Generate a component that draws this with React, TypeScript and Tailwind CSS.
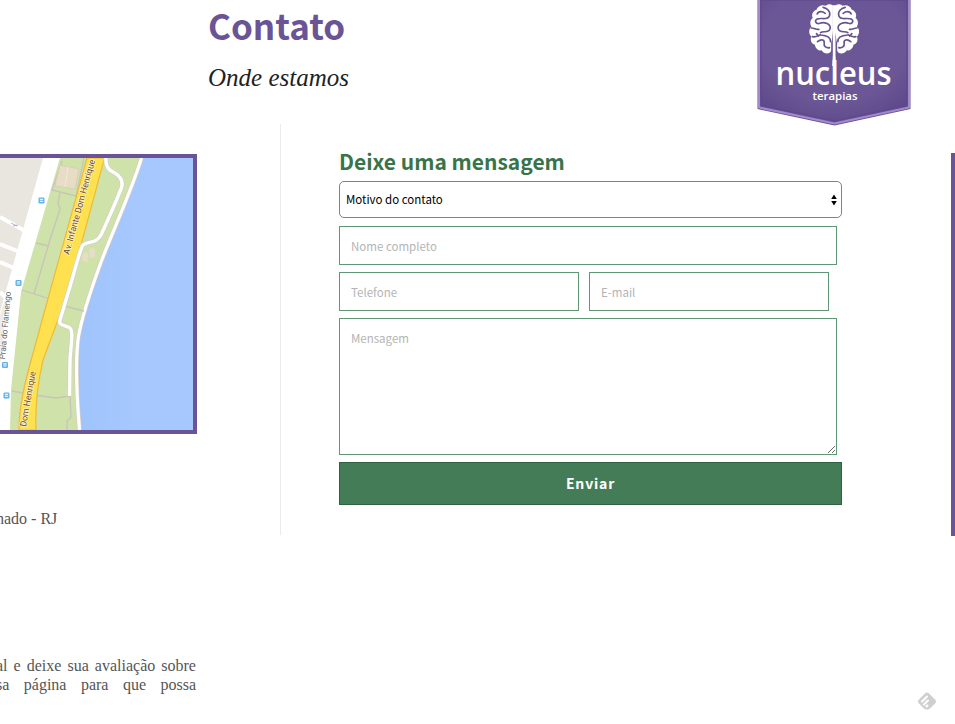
import type { ReactNode } from "react";

const SANS = "font-['Noto_Sans_CJK_JP','Open_Sans',sans-serif]";
const SERIF = "font-['Liberation_Serif',serif]";
const FIELD =
  "block border border-[#5f9673] bg-white px-[11px] text-[11.5px] text-black outline-none placeholder:text-[#b4b4b4] placeholder:opacity-100";

function StreetLabel({ x, y, angle, length, size = 9, fill, children }: {
  x: number; y: number; angle: number; length: number; size?: number; fill: string; children: ReactNode;
}) {
  return (
    <text
      transform={`translate(${x} ${y}) rotate(${angle})`}
      fontFamily="Roboto, sans-serif"
      fontSize={size}
      fill={fill}
      stroke="#fff"
      strokeOpacity="0.65"
      strokeWidth="1.6"
      paintOrder="stroke"
      textLength={length}
      lengthAdjust="spacingAndGlyphs"
    >
      {children}
    </text>
  );
}

function BusStop({ x, y }: { x: number; y: number }) {
  return (
    <g transform={`translate(${x} ${y})`}>
      <rect x="-3" y="-3" width="6" height="6" rx="1.2" fill="#5fb0e8" />
      <rect x="-1.7" y="-1.8" width="3.4" height="1.5" fill="#e4f3fd" />
      <rect x="-1.7" y="0.4" width="3.4" height="1.1" fill="#e4f3fd" />
    </g>
  );
}

function StreetMap() {
  return (
    <svg className="block" width="193" height="272" viewBox="0 158 193 272">
      <defs>
        <linearGradient id="bay" x1="0" x2="1">
          <stop offset="0" stopColor="#9fc3fb" />
          <stop offset="0.5" stopColor="#a6c8ff" />
        </linearGradient>
      </defs>
      <rect y="158" width="193" height="272" fill="#e9e6df" />
      <path d="M0 217L25 231M0 244L20 252M0 262L14 268M0 292L8 300" stroke="#fff" strokeWidth="4" fill="none" />
      <path d="M43 158H62L22 293L13 390V430H0V312Z" fill="#fff" />
      <path d="M0 315L5 300L3 345L0 365Z" fill="#eeece7" />
      <path d="M60 158H145L93 293L80 330L78 373L81 430H10L11 390L21 292Z" fill="#cfe2aa" />
      <path d="M142.500 158C132 192 115 228 102 262C94 284 84 311 79.500 336C76 360 78 400 80.500 430H193V158Z" fill="url(#bay)" />
      <path d="M141.500 158C131 192 114 228 101 262C93 284 83 311 78.500 336C75 360 77 400 79.500 430" fill="none" stroke="#d5cdc4" strokeWidth="4.500" />
      <path d="M141.500 158C131 192 114 228 101 262C93 284 83 311 78.500 336C75 360 77 400 79.500 430" fill="none" stroke="#fff" strokeWidth="3.200" />
      <g fill="none" stroke="#c8c4b9" strokeWidth="1.300">
        <path d="M62 161L52 190L76 196L84 158M60 193L58 203L60 209L49 243L34 294M36 243L49 246M22 290L50 299M64 306L84 311M12 391L34 395L56 398L70 396L71 417L67 421V430" />
      </g>
      <path d="M60 165L79 169L75 189L55 186Z" fill="#e7dcc5" stroke="#d9d0b7" />
      <path d="M68 167L65 187" stroke="#f2ead7" />
      <path d="M83 252L88 253V262L82 261ZM90 248L95 249V258L89 257Z" fill="#e7dcc5" />
      <path d="M87 158H104.500L68 293L43 360C37 386 35 406 36 430H19C19 408 23 390 29 368L49 295Z" fill="#ffe14f" stroke="#edbb37" strokeWidth="1.200" />
      <path id="promenade" d="M106 156C105 166 108 170 115 173C121 177 124 182 121 189C115 204 107 222 101 235C96 244 88 241 83 245C80 248 73 278 68 293L60 320C58 326 66 325 70 328C74 331 70 351 70 361L69.500 396" fill="none" stroke="#d2d2c1" strokeWidth="4.600" />
      <use href="#promenade" />
      <path d="M106 156C105 166 108 170 115 173C121 177 124 182 121 189C115 204 107 222 101 235C96 244 88 241 83 245C80 248 73 278 68 293L60 320C58 326 66 325 70 328C74 331 70 351 70 361L69.500 396" fill="none" stroke="#fff" strokeWidth="3.400" />
      <path d="M11 223L17 226M13 226L18 225" stroke="#9ca3b5" strokeWidth="0.800" />
      <StreetLabel x={69} y={255} angle={-74.5} length={98} fill="#714b24">Av. Infante Dom Henrique</StreetLabel>
      <StreetLabel x={26} y={427} angle={-80} length={56} fill="#714b24">Dom Henrique</StreetLabel>
      <StreetLabel x={5} y={359.500} angle={-85} length={68} size={8.500} fill="#666">Praia do Flamengo</StreetLabel>
      <BusStop x={41.500} y={200.500} />
      <BusStop x={18.500} y={283} />
      <BusStop x={5} y={365} />
      <BusStop x={6.500} y={395.500} />
    </svg>
  );
}

function BrainHalf() {
  return (
    <g>
      <path d="M249 15C241 11 234 12 229 17C218 13 205 17 201 29C189 33 185 45 190 54C181 60 181 72 186 80C176 88 178 103 186 110C180 121 188 132 196 134C198 147 209 153 216 151C225 165 243 163 245 151V128C249 120 249 102 249 92Z" fill="#fff" />
      <g fill="none" stroke="#67548f" strokeWidth="5" strokeLinecap="round" strokeLinejoin="round">
        <path d="M221 22C233 25 244 34 240 47C236 62 213 52 203 57C193 62 200 74 211 70C225 64 244 73 242 85C239 102 220 91 213 98" />
        <path d="M203 42C207 32 220 34 227 40" />
        <path d="M185 84C194 83 199 90 208 88M189 110C203 113 208 103 214 105C227 106 244 110 243 125" />
        <path d="M204 125C216 115 226 120 224 130C222 139 231 145 240 143M201 101L207 108" />
      </g>
    </g>
  );
}

function Logo() {
  return (
    <svg className="ml-auto mr-11 h-[126px] w-[154px] shrink-0" viewBox="757.500 0 154 126" role="img" aria-label="nucleus terapias">
      <defs>
        <radialGradient id="ribbon" cx="0.5" cy="0.35" r="0.75">
          <stop offset="0.65" stopColor="#6b5796" />
          <stop offset="1" stopColor="#5c4688" />
        </radialGradient>
      </defs>
      <path d="M758 0H911V109L835 125.500L758 109Z" fill="#69519a" />
      <path d="M759.500 0V107.500L835 123.500L909.500 107.500V0" fill="none" stroke="#a28bc9" strokeWidth="2" />
      <path d="M761.500 0H907.500V105.500L835 121L761.500 105.500Z" fill="url(#ribbon)" stroke="#5d468b" strokeWidth="1" />
      <g transform="translate(750 0) scale(.33333)">
        <BrainHalf />
        <g transform="translate(508 0) scale(-1 1)"><BrainHalf /></g>
        <path d="M248 16H260V94L258 108V165L260 198H248L250 165V108L248 94Z" fill="#fff" />
      </g>
      <text x="776" y="85" textLength="116" lengthAdjust="spacingAndGlyphs" fontFamily="Open Sans, sans-serif" fontSize="33" fontWeight="600" fill="#fff">nucleus</text>
      <text x="813" y="100" textLength="45" lengthAdjust="spacingAndGlyphs" fontFamily="Open Sans, sans-serif" fontSize="11" fontWeight="600" fill="#fff">terapias</text>
    </svg>
  );
}

function ContactForm() {
  return (
    <form className={`ml-[58px] w-[503px] pt-[21px] ${SANS}`}>
      <h2 className="h-9 whitespace-nowrap text-[21px] font-bold leading-8 text-[#397449]">Deixe uma mensagem</h2>
      <div className="flex h-[37px] items-center justify-between rounded-[5px] border border-[#5f9673] pl-1.5 pr-1 text-[11.5px] text-black">
        <span>Motivo do contato</span>
        <svg width="6" height="12" viewBox="0 0 6 12"><path d="M3 .5L5.800 5H.2ZM3 11.500L.2 7H5.800Z" /></svg>
      </div>
      <input className={`${FIELD} mt-2 h-[39px] w-[498px]`} placeholder="Nome completo" />
      <div className="mt-[7px] flex gap-2.5">
        <input className={`${FIELD} h-[39px] w-60`} placeholder="Telefone" />
        <input className={`${FIELD} h-[39px] w-60`} placeholder="E-mail" />
      </div>
      <textarea className={`${FIELD} mt-[7px] h-[137px] w-[498px] pt-[11px]`} placeholder="Mensagem" />
      <button className="mt-[7px] block h-[43px] w-[503px] border border-[#2d6241] bg-[#457c58] text-[14px] font-bold tracking-[0.8px] text-white">Enviar</button>
    </form>
  );
}

export default function App() {
  return (
    <div className="flex h-[724px] w-[955px] flex-col overflow-hidden bg-white">
      <header className="flex h-[124px] shrink-0">
        <div className="pl-[208px]">
          <h1 className={`h-[50px] whitespace-nowrap text-[35px] font-bold leading-[50px] text-[#6a5495] ${SANS}`}>Contato</h1>
          <p className={`mt-2 whitespace-nowrap text-[25px] italic leading-10 text-[#222] ${SERIF}`}>Onde estamos</p>
        </div>
        <Logo />
      </header>
      <main className="flex h-[411px] shrink-0">
        <section className="w-[280px] pt-[30px]">
          <div className="h-[280px] w-[197px] border-y-4 border-r-4 border-[#6a5495]"><StreetMap /></div>
          <p className={`mt-[74px] whitespace-nowrap text-[16px] leading-[22px] text-[#555] ${SERIF}`}><span className="-ml-1">hado - RJ</span></p>
        </section>
        <div className="w-px bg-[#ebebeb]" />
        <ContactForm />
        <div className="ml-auto mt-[29px] h-[383px] w-1 bg-[#6a5495]" />
      </main>
      <footer className="flex flex-1 justify-between">
        <div className={`w-[196px] pt-[121px] text-[16px] leading-[19px] text-[#555] ${SERIF}`}>
          <p className="-ml-1 flex justify-between whitespace-nowrap"><span>al</span><span>e</span><span>deixe</span><span>sua</span><span>avaliação</span><span>sobre</span></p>
          <p className="-ml-1 flex justify-between whitespace-nowrap"><span>sa</span><span>página</span><span>para</span><span>que</span><span>possa</span></p>
        </div>
        <svg className="mr-[18px] mt-[157px]" width="20" height="20" viewBox="0 0 20 20">
          <path d="M10 .5Q11 .5 12 1.500L18.500 8Q20 9.500 18.500 11L13 16.500Q12 17.500 11 17.500H9Q8 17.500 7 16.500L1.500 11Q0 9.500 1.500 8L8 1.500Q9 .5 10 .5Z" fill="#cfcfcf" />
          <path d="M5 9.500L10 4.500M7 12.500L11 8.500M9.500 14.500L10.500 13.500" stroke="#fff" strokeWidth="2" strokeLinecap="round" />
        </svg>
      </footer>
    </div>
  );
}
